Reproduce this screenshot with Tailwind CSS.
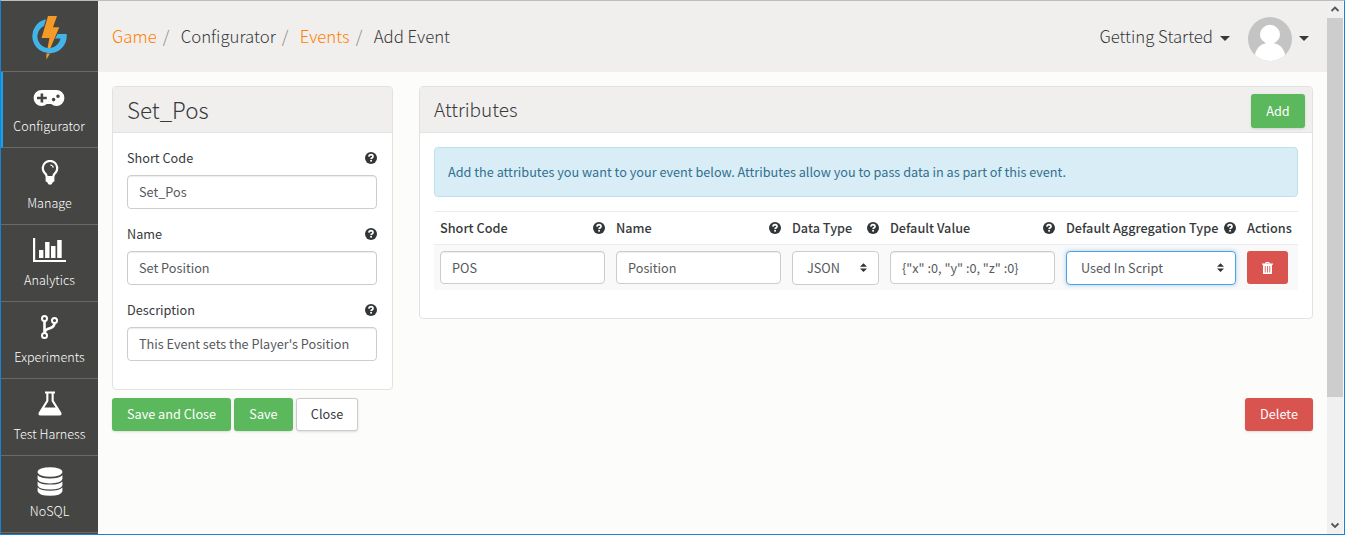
<!DOCTYPE html>
<html lang="en">
<head>
<meta charset="utf-8">
<title>Add Event</title>
<script src="https://cdn.jsdelivr.net/npm/@tailwindcss/browser@4"></script>
</head>
<body class="h-[535px] w-[1345px] overflow-hidden bg-[#fcfcfa] font-['Noto_Sans_CJK_SC','Noto_Sans',sans-serif] text-[12.7px] leading-5 text-[#373a3c]">
<svg class="hidden">
  <symbol id="help" viewBox="0 0 12 12"><circle cx="6" cy="6" r="6" fill="#333638"/><path d="M3.9 4.6Q4.1 2.7 6 2.7Q8 2.8 8 4.4Q8 5.3 7 5.9Q6.1 6.3 6.1 7.1" fill="none" stroke="#fff" stroke-width="1.7"/><rect x="5.2" y="7.9" width="1.8" height="1.7" fill="#fff"/></symbol>
  <symbol id="sort" viewBox="0 0 8 10"><path d="M0 4L4 0L8 4ZM0 6H8L4 10Z" fill="#333"/></symbol>
</svg>
<div class="flex h-[535px] border border-[#1a82d2] border-t-[#bdbdbd]">
  <nav class="flex w-[97px] shrink-0 flex-col bg-[#454543] text-[12.6px] font-light text-white">
    <div class="flex h-[71px] shrink-0 justify-center border-b border-[#696967] pr-0.5 pt-[14px]">
      <svg class="h-[46px] w-[36px]" viewBox="0 0 36 46"><path d="M15 4.2A17.2 17.2 0 1 0 35.6 19H26.6L24 23.4H29.4A11.6 11.6 0 1 1 13 11Z" fill="#43b4e8"/><path d="M17 1H26L22 12.3H28.3L19.4 33H16.6L18.4 23H10.6Z" fill="#f69a27"/><path d="M15.4 38.5H19L15.4 44.5Z" fill="#f69a27"/></svg>
    </div>
    <a class="flex h-[76px] shrink-0 flex-col items-center border-b border-l-2 border-b-[#696967] border-l-[#1ba1e8] pr-[3px]">
      <svg class="mt-4 h-[20px] w-[32px]" viewBox="0 0 32 20"><path fill-rule="evenodd" fill="#fff" d="M8.6 2H23.4A8 8 0 0 1 23.4 18Q20.4 18 18.2 16H13.8Q11.6 18 8.6 18A8 8 0 0 1 8.6 2ZM7.6 5.4V8.8H4V11.2H7.6V14.6H10.2V11.2H13.8V8.8H10.2V5.4ZM20.6 9.8A1.8 1.8 0 1 0 20.6 13.4A1.8 1.8 0 1 0 20.6 9.8ZM25 6.4A1.8 1.8 0 1 0 25 10A1.8 1.8 0 1 0 25 6.4Z"/></svg>
      <span class="mt-2">Configurator</span>
    </a>
    <a class="flex h-[77px] shrink-0 flex-col items-center border-b border-[#696967]">
      <svg class="mt-3 h-[25px] w-[18px]" viewBox="0 0 18 25"><path d="M5.6 16.2Q5.2 14.2 3.2 12.4A7.2 7.2 0 1 1 14.8 12.4Q12.8 14.2 12.4 16.2" fill="none" stroke="#fff" stroke-width="2.2"/><path d="M9.3 5Q11.8 5.2 12.3 7.6" fill="none" stroke="#fff" stroke-width="1.2"/><path d="M4.6 16H13.4V21.2L11.6 22.6Q11 24.8 9 24.8Q7 24.8 6.4 22.6L4.6 21.2Z" fill="#fff"/></svg>
      <span class="mt-2">Manage</span>
    </a>
    <a class="flex h-[77px] shrink-0 flex-col items-center border-b border-[#696967]">
      <svg class="mt-[13px] h-[24px] w-[33px]" viewBox="0 0 33 24"><path fill="#fff" d="M0 0H2.2V22H33V24H0ZM6 12H10.4V20H6ZM12.1 4H16.5V20H12.1ZM18 8H22.5V20H18ZM24.2 2H28.7V20H24.2Z"/></svg>
      <span class="mt-[8px]">Analytics</span>
    </a>
    <a class="flex h-[77px] shrink-0 flex-col items-center border-b border-[#696967]">
      <svg class="mt-[13px] h-[24px] w-[17px]" viewBox="0 0 17 24"><g fill="none" stroke="#fff" stroke-width="2"><circle cx="3.5" cy="3.5" r="2.5"/><circle cx="3.5" cy="20.5" r="2.5"/><circle cx="13.5" cy="5.5" r="2.5"/></g><path d="M3.5 6V18M13.5 8Q13.5 11.6 9.5 13Q3.8 14.6 3.5 17.8" fill="none" stroke="#fff" stroke-width="2.6"/></svg>
      <span class="mt-[8px]">Experiments</span>
    </a>
    <a class="flex h-[77px] shrink-0 flex-col items-center border-b border-[#696967]">
      <svg class="mt-3 h-[25px] w-[24px]" viewBox="0 0 24 25"><path fill-rule="evenodd" fill="#fff" d="M7 0.5H17V2.5H15.7V9.6L23.2 21.6Q24.4 24.5 21.4 24.6H2.6Q-.4 24.5.8 21.6L8.3 9.6V2.5H7ZM10.4 2.5V10.2L6.4 16.6H17.6L13.6 10.2V2.5Z"/></svg>
      <span class="mt-2">Test Harness</span>
    </a>
    <a class="flex h-[77px] shrink-0 flex-col items-center border-b border-[#696967]">
      <svg class="mt-[11px] h-[29px] w-[26px]" viewBox="0 0 26 29"><ellipse cx="13" cy="5" rx="12.4" ry="4.8" fill="#fff"/><path fill="#fff" d="M.6 8.2Q4 11.4 13 11.4T25.4 8.2V12Q24 16.4 13 16.4T.6 12ZM.6 14.4Q4 17.6 13 17.6T25.4 14.4V18.2Q24 22.6 13 22.6T.6 18.2ZM.6 20.6Q4 23.8 13 23.8T25.4 20.6V24.2Q24 28.8 13 28.8T.6 24.2Z"/></svg>
      <span class="mt-[5px]">NoSQL</span>
    </a>
  </nav>

  <div class="flex min-w-0 grow flex-col">
    <header class="flex h-[71px] shrink-0 items-center bg-[#f0efee] pl-[14px] pr-[18px] text-[16.8px] font-light leading-6">
      <div class="mb-0.5 flex grow">
        <a class="text-[#ff7f00]">Game</a><span class="w-[24px] pl-[6px] text-[#888]">/</span>
        <a>Configurator</a><span class="w-[24px] pl-[6px] text-[#888]">/</span>
        <a class="text-[#ff7f00]">Events</a><span class="w-[24px] pl-[6px] text-[#888]">/</span>
        <a>Add Event</a>
      </div>
      <span class="mb-0.5">Getting Started</span>
      <svg class="ml-[7px] mt-[3px] h-[5px] w-[10px]" viewBox="0 0 10 5"><path d="M0 0H10L5 5Z" fill="#373a3c"/></svg>
      <svg class="ml-[18px] mt-[4px] h-[44px] w-[44px]" viewBox="0 0 44 44"><clipPath id="av"><circle cx="22" cy="22" r="22"/></clipPath><g clip-path="url(#av)"><rect width="44" height="44" fill="#c4c4c4"/><path d="M6 40Q9 27 18 26.2Q12 23 12 17.5A10 9.7 0 0 1 32 17.5Q32 23 26 26.2Q35 27 38 40L34 46H10Z" fill="#fff"/></g></svg>
      <svg class="ml-[7px] mt-[3px] h-[5px] w-[10px]" viewBox="0 0 10 5"><path d="M0 0H10L5 5Z" fill="#373a3c"/></svg>
    </header>

    <main class="px-[14px] pt-[14px]">
      <div class="flex items-start justify-between">
        <section class="h-[304px] w-[281px] overflow-hidden rounded-[4px] border border-[#e2e2e0] bg-white">
          <h1 class="h-[46px] border-b border-[#e2e2e0] bg-[#f0efee] pl-[14px] text-[22.4px] font-light leading-[44px]">Set_Pos</h1>
          <div class="flex flex-col gap-[15px] pl-[14px] pr-[15px] pt-[15px]">
            <div><div class="flex h-[27px] items-start justify-between"><span>Short Code</span><svg class="mt-[4px] h-3 w-3"><use href="#help"/></svg></div><div class="h-[34px] rounded-[4px] border border-[#ccc] pl-[11px] leading-8 text-[#55595c] shadow-[inset_0_1px_1px_rgba(0,0,0,0.075)]">Set_Pos</div></div>
            <div><div class="flex h-[27px] items-start justify-between"><span>Name</span><svg class="mt-[4px] h-3 w-3"><use href="#help"/></svg></div><div class="h-[34px] rounded-[4px] border border-[#ccc] pl-[11px] leading-8 text-[#55595c] shadow-[inset_0_1px_1px_rgba(0,0,0,0.075)]">Set Position</div></div>
            <div><div class="flex h-[27px] items-start justify-between"><span>Description</span><svg class="mt-[4px] h-3 w-3"><use href="#help"/></svg></div><div class="h-[34px] rounded-[4px] border border-[#ccc] pl-[11px] leading-8 text-[#55595c] shadow-[inset_0_1px_1px_rgba(0,0,0,0.075)]">This Event sets the Player's Position</div></div>
          </div>
        </section>

        <section class="h-[233px] w-[894px] overflow-hidden rounded-[4px] border border-[#e2e2e0] bg-white">
          <div class="flex h-[46px] items-center justify-between border-b border-[#e2e2e0] bg-[#f0efee] pl-[14px] pr-[7px]">
            <h2 class="mb-px text-[19px] font-light leading-6">Attributes</h2>
            <button class="mt-[3px] h-[34px] w-[54px] rounded-[3px] bg-[#5cb85c] text-white shadow-sm">Add</button>
          </div>
          <div class="px-[14px] pt-[14px]">
            <p class="h-[50px] rounded-[4px] border border-[#bce0ee] bg-[#d9edf7] pl-[13px] leading-[48px] text-[#31708f]">Add the attributes you want to your event below. Attributes allow you to pass data in as part of this event.</p>
            <div class="mt-[14px] grid h-[34px] grid-cols-[165px_165px_87px_165px_170px_46px] items-center gap-x-[11px] border-y border-[#ececec] pl-[6px] font-medium">
              <div class="flex items-center justify-between"><span>Short Code</span><svg class="h-3 w-3"><use href="#help"/></svg></div>
              <div class="flex items-center justify-between"><span>Name</span><svg class="h-3 w-3"><use href="#help"/></svg></div>
              <div class="flex items-center justify-between"><span>Data Type</span><svg class="h-3 w-3"><use href="#help"/></svg></div>
              <div class="flex items-center justify-between"><span>Default Value</span><svg class="h-3 w-3"><use href="#help"/></svg></div>
              <div class="flex items-center justify-between whitespace-nowrap"><span>Default Aggregation Type</span><svg class="h-3 w-3 shrink-0"><use href="#help"/></svg></div>
              <span>Actions</span>
            </div>
            <div class="grid h-[45px] grid-cols-[165px_165px_87px_165px_170px_41px] gap-x-[11px] bg-[#f9f9f9] pl-[6px] pt-[6px] leading-8 text-[#55595c]">
              <div class="h-[33px] rounded-[4px] border border-[#ccc] bg-white pl-[11px] shadow-[inset_0_1px_1px_rgba(0,0,0,0.075)]">POS</div>
              <div class="h-[33px] rounded-[4px] border border-[#ccc] bg-white pl-[11px] shadow-[inset_0_1px_1px_rgba(0,0,0,0.075)]">Position</div>
              <div class="flex h-[34px] items-center justify-between rounded-[4px] border border-[#ccc] bg-white pl-[14px] pr-[11px]"><span>JSON</span><svg class="mb-px h-[9px] w-[7px]"><use href="#sort"/></svg></div>
              <div class="h-[33px] rounded-[4px] border border-[#ccc] bg-white pl-[11px] shadow-[inset_0_1px_1px_rgba(0,0,0,0.075)]">{"x" :0, "y" :0, "z" :0}</div>
              <div class="flex h-[34px] items-center justify-between rounded-[4px] border border-[#4ba3e3] bg-white pl-[14px] pr-[11px] shadow-[0_0_4px_rgba(102,175,233,0.6)]"><span>Used In Script</span><svg class="mb-px h-[9px] w-[7px]"><use href="#sort"/></svg></div>
              <button class="flex h-[33px] items-center justify-center rounded-[3px] bg-[#d9534f]"><svg class="h-3 w-[11px]" viewBox="0 0 11 12"><path fill-rule="evenodd" fill="#fff" d="M3.2 1.6L3.8 0H7.2L7.8 1.6H11V2.8H10V12H1V2.8H0V1.6ZM4.2 1.6H6.8L6.6 1H4.4ZM2.8 4V10.5H3.6V4ZM5.1 4V10.5H5.9V4ZM7.4 4V10.5H8.2V4Z"/></svg></button>
            </div>
          </div>
        </section>
      </div>
      <div class="mt-2 flex gap-[3px]">
        <button class="h-[33px] w-[119px] rounded-[3px] bg-[#5cb85c] pb-0.5 text-white shadow-sm">Save and Close</button>
        <button class="h-[33px] w-[59px] rounded-[3px] bg-[#5cb85c] pb-0.5 text-white shadow-sm">Save</button>
        <button class="h-[33px] w-[62px] rounded-[3px] border border-[#ccc] bg-white pb-0.5 shadow-sm">Close</button>
        <button class="ml-auto h-[33px] w-[68px] rounded-[3px] bg-[#d9534f] pb-0.5 text-white shadow-sm">Delete</button>
      </div>
    </main>
  </div>

  <div class="flex w-[17px] shrink-0 flex-col items-center border-r border-[#f8f8f8] bg-[#f0f0f0]">
    <svg class="h-[17px] w-4" viewBox="0 0 16 17"><path d="M4.5 10L8 6.5L11.5 10" fill="none" stroke="#555" stroke-width="1.8"/></svg>
    <div class="h-[379px] w-full bg-[#cdcdcd]"></div>
    <svg class="mt-auto h-[17px] w-4" viewBox="0 0 16 17"><path d="M4.5 6.5L8 10L11.5 6.5" fill="none" stroke="#555" stroke-width="1.8"/></svg>
  </div>
</div>
</body>
</html>
